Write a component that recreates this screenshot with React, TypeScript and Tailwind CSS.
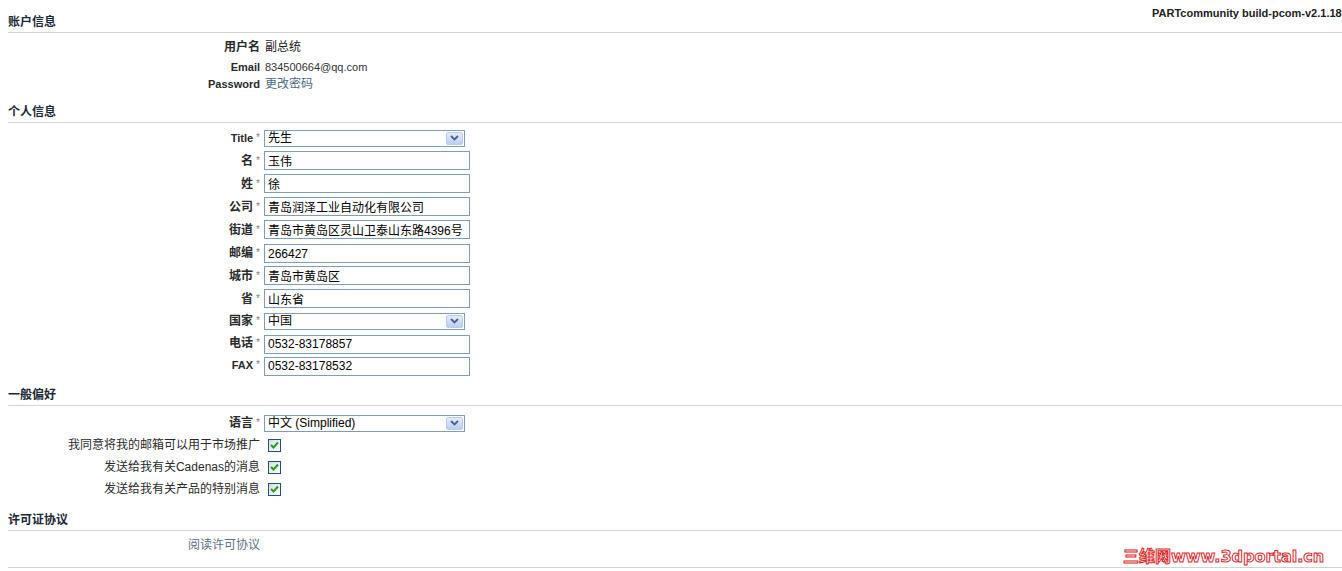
const font = "font-['Liberation_Sans','Noto_Sans_CJK_SC',sans-serif]"

function SectionHeader({ title, className = '' }: { title: string; className?: string }) {
  return (
    <div className={`ml-2 border-b border-[#d4d4cc] pb-[3px] ${className}`}>
      <div className="text-[12px] leading-[14px] font-bold text-[#1b2836]">{title}</div>
    </div>
  )
}

function Label({ text, required, bold = true, small }: { text: string; required?: boolean; bold?: boolean; small?: boolean }) {
  return (
    <div
      className={`w-[260px] shrink-0 text-right text-[#2a2a2a] ${bold ? 'font-bold' : ''} ${small ? 'text-[11px]' : 'text-[12px]'} leading-[14px] whitespace-nowrap`}
    >
      {text}
      {required && <span className="ml-[3px] font-normal text-[10px] text-[#808080] align-top">*</span>}
    </div>
  )
}

function TextInput({ value }: { value: string }) {
  return (
    <input
      readOnly
      defaultValue={value}
      className={`w-[206px] h-[19px] border border-[#7f9db9] bg-white px-[3px] text-[12px] leading-[17px] text-black outline-none ${font}`}
    />
  )
}

function Select({ value }: { value: string }) {
  return (
    <div className="w-[201px] h-[17px] border border-[#7f9db9] bg-white flex items-center justify-between">
      <span className="pl-[3px] text-[12px] leading-[15px] text-black whitespace-nowrap">{value}</span>
      <span className="mr-[1px] w-[17px] h-[13px] rounded-[2px] border border-[#b9cbf3] bg-gradient-to-b from-[#e4ecfd] to-[#b9cdf6] flex items-center justify-center">
        <svg width="9" height="6" viewBox="0 0 9 6">
          <path d="M1 1 L4.5 4.5 L8 1" fill="none" stroke="#4d6185" strokeWidth="1.8" />
        </svg>
      </span>
    </div>
  )
}

function Checkbox() {
  return (
    <span className="ml-[8px] w-[13px] h-[13px] border border-[#1c5180] bg-gradient-to-br from-[#dcdcd7] to-white flex items-center justify-center">
      <svg width="9" height="8" viewBox="0 0 9 8">
        <path d="M1 4 L3.5 6.5 L8 1.5" fill="none" stroke="#21a121" strokeWidth="2" />
      </svg>
    </span>
  )
}

function FieldRow({ label, required = true, small, h = 'h-[23px]', children }: { label: string; required?: boolean; small?: boolean; h?: string; children: React.ReactNode }) {
  return (
    <div className={`flex items-center ${h}`}>
      <Label text={label} required={required} small={small} />
      <div className="ml-[4px]">{children}</div>
    </div>
  )
}

const personal: [string, string][] = [
  ['名', '玉伟'],
  ['姓', '徐'],
  ['公司', '青岛润泽工业自动化有限公司'],
  ['街道', '青岛市黄岛区灵山卫泰山东路4396号'],
  ['邮编', '266427'],
  ['城市', '青岛市黄岛区'],
  ['省', '山东省'],
]

const prefs = ['我同意将我的邮箱可以用于市场推广', '发送给我有关Cadenas的消息', '发送给我有关产品的特别消息']

export default function App() {
  return (
    <div className={`relative w-full h-[571px] bg-white overflow-hidden text-[#2a2a2a] ${font}`}>
      {/* account */}
      <div className="ml-2 flex justify-between border-b border-[#d4d4cc] pb-[3px]">
        <div className="pt-[15px] text-[12px] leading-[14px] font-bold text-[#1b2836]">账户信息</div>
        <div className="w-[190px] overflow-hidden whitespace-nowrap pt-[6px] text-[11px] leading-[14px] font-bold text-[#222]">
          PARTcommunity build-pcom-v2.1.18
        </div>
      </div>
      <div className="pt-[4px]">
        <div className="flex items-center h-[20px]">
          <Label text="用户名" />
          <span className="ml-[5px] text-[12px] text-[#222]">副总统</span>
        </div>
        <div className="flex items-center h-[20px]">
          <Label text="Email" small />
          <span className="ml-[5px] text-[11px] text-[#333]">834500664@qq.com</span>
        </div>
        <div className="flex items-center h-[14px]">
          <Label text="Password" small />
          <span className="ml-[5px] text-[12px] text-[#4a6c82]">更改密码</span>
        </div>
      </div>

      {/* personal */}
      <SectionHeader title="个人信息" className="mt-[14px]" />
      <div className="pt-[4px]">
        <FieldRow label="Title" small h="h-[22px]">
          <Select value="先生" />
        </FieldRow>
        {personal.map(([l, v]) => (
          <FieldRow key={l} label={l}>
            <TextInput value={v} />
          </FieldRow>
        ))}
        <FieldRow label="国家" h="h-[22px]">
          <Select value="中国" />
        </FieldRow>
        <FieldRow label="电话" h="h-[22px]">
          <TextInput value="0532-83178857" />
        </FieldRow>
        <FieldRow label="FAX" small h="h-[22px]">
          <TextInput value="0532-83178532" />
        </FieldRow>
      </div>

      {/* prefs */}
      <SectionHeader title="一般偏好" className="mt-[12px]" />
      <div className="pt-[6px]">
        <FieldRow label="语言" h="h-[22px]">
          <Select value="中文 (Simplified)" />
        </FieldRow>
        {prefs.map((p) => (
          <div key={p} className="flex items-center h-[22px]">
            <Label text={p} bold={false} />
            <Checkbox />
          </div>
        ))}
      </div>

      {/* license */}
      <SectionHeader title="许可证协议" className="mt-[13px]" />
      <div className="ml-2 border-b border-[#d4d4cc] pt-[7px] pb-[15px]">
        <div className="w-[252px] text-right text-[12px] leading-[14px] text-[#5d7282]">阅读许可协议</div>
      </div>

      {/* watermark */}
      <div className="absolute left-[1123px] top-[548px] whitespace-nowrap text-[16px] leading-[18px] font-bold text-white [-webkit-text-stroke:1px_#e0282b] font-['DejaVu_Sans','Noto_Sans_CJK_SC',sans-serif]">
        三维网www.3dportal.cn
      </div>
    </div>
  )
}
